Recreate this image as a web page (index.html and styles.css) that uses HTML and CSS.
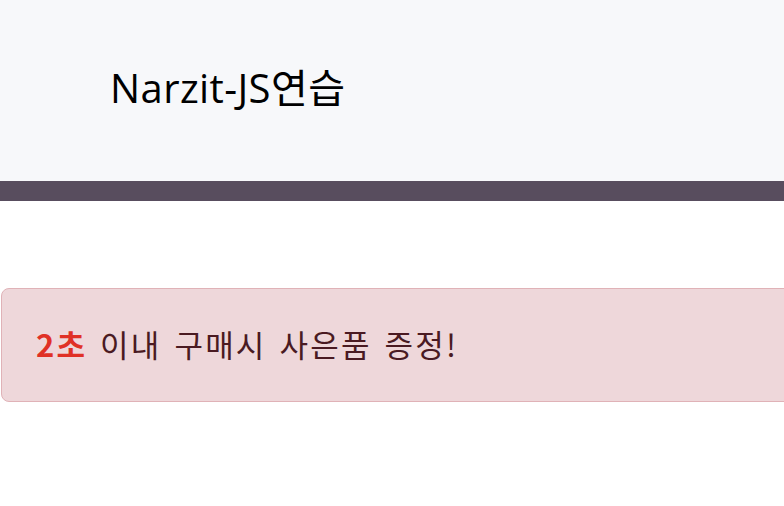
FILE: index.html
```html
<!DOCTYPE html>
<html lang="ko">
<head>
<meta charset="utf-8">
<link rel="stylesheet" href="styles.css">
</head>
<body>
<header class="navbar">
  <h1 class="brand">Narzit-JS연습</h1>
</header>
<div class="bar"></div>
<main class="content">
  <div class="alert"><strong class="sec">2초</strong> 이내 구매시 사은품 증정!</div>
</main>
</body>
</html>
```
FILE: styles.css
```css
html, body {
  margin: 0;
  padding: 0;
  background: #ffffff;
  font-family: "Open Sans", "Noto Sans CJK KR", sans-serif;
  overflow: hidden;
}
.navbar {
  background: #f7f8fa;
  height: 181px;
  display: flex;
  align-items: center;
  padding-left: 110px;
  padding-bottom: 10px;
  box-sizing: border-box;
}
.brand {
  margin: 0;
  font-weight: 400;
  font-size: 40px;
  letter-spacing: 0.4px;
  color: #000;
  font-family: "Open Sans", "Noto Sans CJK KR", sans-serif;
}
.bar {
  height: 20px;
  background: #584d5e;
}
.content {
  padding-top: 87px;
  padding-left: 1px;
  margin-right: -20px;
}
.alert {
  height: 114px;
  box-sizing: border-box;
  border: 1px solid #e0b2b7;
  border-radius: 8px;
  background: #eed7da;
  color: #4a1a22;
  font-size: 31px;
  font-family: "Noto Sans CJK KR", sans-serif;
  display: flex;
  align-items: center;
  padding-left: 34px;
  padding-bottom: 4px;
  white-space: pre;
  word-spacing: 2px;
  letter-spacing: 2.2px;
}
.sec {
  color: #e03126;
  font-weight: 700;
}
```
